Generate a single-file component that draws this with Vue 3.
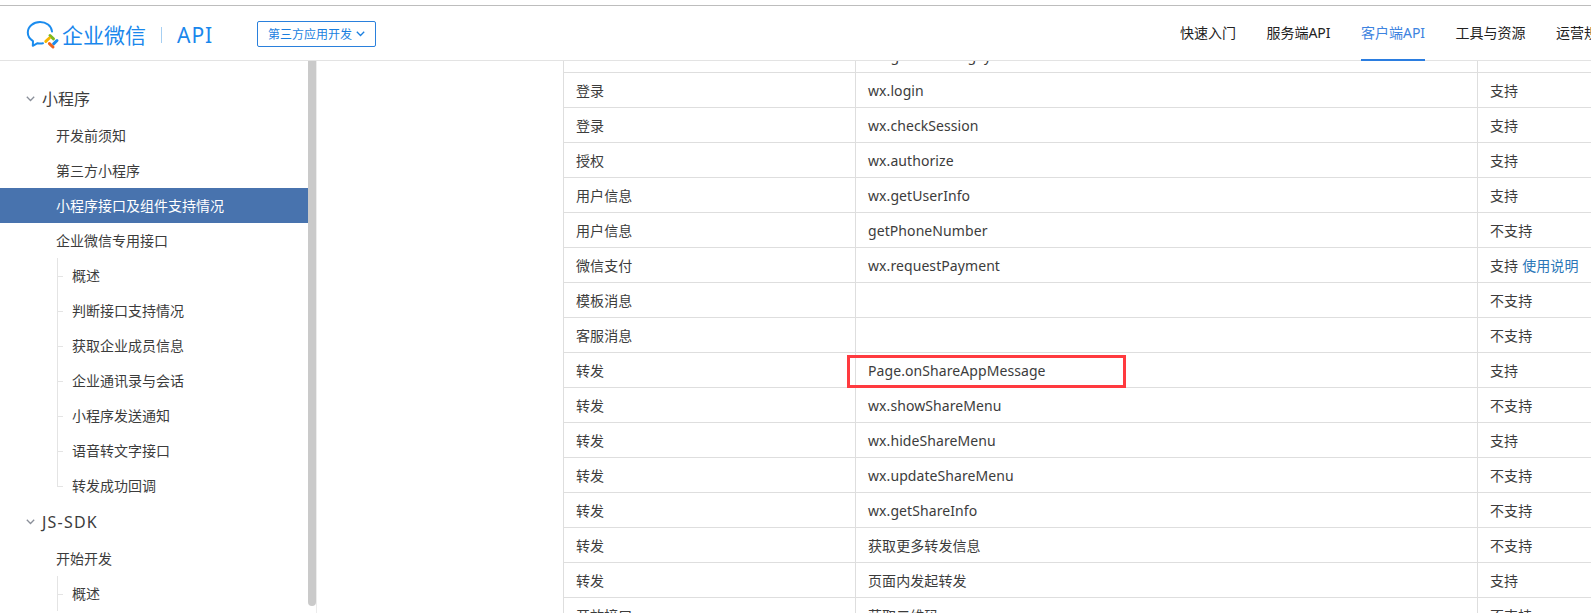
<script setup>
const sideItems = [
  { t: '小程序', k: 'group' },
  { t: '开发前须知', k: 'item' },
  { t: '第三方小程序', k: 'item' },
  { t: '小程序接口及组件支持情况', k: 'item active' },
  { t: '企业微信专用接口', k: 'item' },
  { t: '概述', k: 'sub first' },
  { t: '判断接口支持情况', k: 'sub' },
  { t: '获取企业成员信息', k: 'sub' },
  { t: '企业通讯录与会话', k: 'sub' },
  { t: '小程序发送通知', k: 'sub' },
  { t: '语音转文字接口', k: 'sub' },
  { t: '转发成功回调', k: 'sub last' },
  { t: 'JS-SDK', k: 'group wide' },
  { t: '开始开发', k: 'item' },
  { t: '概述', k: 'sub first' },
]
const nav = ['快速入门', '服务端API', '客户端API', '工具与资源', '运营规范']
const rows = [
  ['', 'wx.getExtConfigSync', ''],
  ['登录', 'wx.login', '支持'],
  ['登录', 'wx.checkSession', '支持'],
  ['授权', 'wx.authorize', '支持'],
  ['用户信息', 'wx.getUserInfo', '支持'],
  ['用户信息', 'getPhoneNumber', '不支持'],
  ['微信支付', 'wx.requestPayment', '支持', '使用说明'],
  ['模板消息', '', '不支持'],
  ['客服消息', '', '不支持'],
  ['转发', 'Page.onShareAppMessage', '支持'],
  ['转发', 'wx.showShareMenu', '不支持'],
  ['转发', 'wx.hideShareMenu', '支持'],
  ['转发', 'wx.updateShareMenu', '不支持'],
  ['转发', 'wx.getShareInfo', '不支持'],
  ['转发', '获取更多转发信息', '不支持'],
  ['转发', '页面内发起转发', '支持'],
  ['开放接口', '获取二维码', '不支持'],
]
</script>

<template>
  <div class="page">
    <header class="header">
      <div class="brand">
        <svg class="logo" width="36" height="32" viewBox="0 0 36 32" fill="none">
          <path d="M26 12.5C25.4 6.5 20 3 14 3C7.5 3 1.8 7.6 1.8 13.6C1.8 17.2 3.9 20.2 7 22.1L6.8 26.8L11.6 24.2C13.2 24.5 15 24.6 17 24.2" stroke="#1b8cee" stroke-width="2" stroke-linecap="round" stroke-linejoin="round"/>
          <path d="M24 16.5L27.5 19.8" stroke="#7fb81f" stroke-width="3" stroke-linecap="round"/>
          <path d="M31 21.5L27.6 24.8" stroke="#1b8cee" stroke-width="3" stroke-linecap="round"/>
          <path d="M27 28L23.4 24.6" stroke="#f0631e" stroke-width="3" stroke-linecap="round"/>
          <path d="M19.8 22.4L23.4 19" stroke="#f7b500" stroke-width="3" stroke-linecap="round"/>
        </svg>
        <span class="brand-name">企业微信</span>
        <i class="brand-sep"></i>
        <span class="brand-api">API</span>
      </div>
      <button class="switcher">
        第三方应用开发
        <svg width="9" height="6" viewBox="0 0 9 6" fill="none"><path d="M.8.8L4.5 4.5 8.2.8" stroke="#1a7fe0" stroke-width="1.3"/></svg>
      </button>
      <nav class="nav">
        <a v-for="n in nav" :key="n" :class="{ on: n === '客户端API' }">{{ n }}</a>
      </nav>
    </header>

    <div class="body">
      <aside class="side">
        <div class="side-list">
          <div v-for="(s, i) in sideItems" :key="i" class="side-row" :class="s.k">
            <svg v-if="s.k.startsWith('group')" class="caret" width="9" height="6" viewBox="0 0 9 6" fill="none"><path d="M.8.8L4.5 4.5 8.2.8" stroke="#8a8f99" stroke-width="1.3"/></svg>
            {{ s.t }}
          </div>
        </div>
        <div class="scrollbar"></div>
      </aside>

      <main class="main">
        <table class="table">
          <tbody>
            <tr v-for="(r, i) in rows" :key="i">
              <td class="c1">{{ r[0] }}</td>
              <td class="c2">{{ r[1] }}</td>
              <td class="c3">{{ r[2] }}<a v-if="r[3]" class="link">{{ r[3] }}</a></td>
            </tr>
          </tbody>
        </table>
        <div class="mark"></div>
      </main>
    </div>
  </div>
</template>

<style>
html, body { margin: 0; padding: 0; overflow: hidden; background: #fff; }
</style>

<style scoped>
.page {
  width: 1591px;
  height: 613px;
  overflow: hidden;
  display: flex;
  flex-direction: column;
  background: #fff;
  color: #333;
  font-family: "Noto Sans", "Noto Sans CJK SC", sans-serif;
  font-size: 14px;
}
.header {
  flex: none;
  height: 54px;
  margin-top: 5px;
  border-top: 1px solid #bdbdbd;
  border-bottom: 1px solid #e3e3e3;
  box-sizing: content-box;
  display: flex;
  align-items: center;
  padding-left: 26px;
  position: relative;
  z-index: 2;
  background: #fff;
}
.brand { display: flex; align-items: center; width: 231px; margin-top: 4px; color: #1a87ec; }
.logo { flex: none; }
.brand-name { font-size: 21px; line-height: 28px; }
.brand-sep { width: 1px; height: 16px; background: #a6cff2; margin: 0 15px 0 15px; }
.brand-api { font-size: 21px; letter-spacing: 1px; }
.switcher {
  width: 119px;
  height: 26px;
  margin-top: 2px;
  padding: 0;
  display: flex;
  align-items: center;
  justify-content: center;
  gap: 4px;
  background: #fff;
  border: 1px solid #2a80dc;
  border-radius: 2px;
  color: #1a7fe0;
  font: inherit;
  font-size: 12px;
}
.nav {
  position: absolute;
  left: 1180px;
  top: 0;
  bottom: -1px;
  display: flex;
  gap: 30.4px;
  white-space: nowrap;
}
.nav a {
  display: flex;
  align-items: center;
  height: 100%;
  box-sizing: border-box;
  padding-bottom: 2px;
  border-bottom: 2px solid transparent;
  color: #222;
  font-size: 14px;
}
.nav a.on { color: #3d83e0; border-bottom-color: #2b7de0; }
.body { flex: 1; min-height: 0; display: flex; overflow: hidden; }
.side {
  flex: none;
  width: 316px;
  border-right: 1px solid #ececec;
  display: flex;
  position: relative;
  overflow: hidden;
}
.side-list { width: 308px; flex: none; padding-top: 19px; }
.side-row {
  height: 35px;
  line-height: 35px;
  padding-left: 56px;
  white-space: nowrap;
  position: relative;
  font-size: 14px;
  color: #3c3c3c;
}
.group { padding-left: 42px; font-size: 16px; height: 38px; line-height: 38px; color: #3c3c3c; }
.wide { letter-spacing: 1.2px; }
.caret { position: absolute; left: 26px; top: 16px; }
.active { background: #4873ae; color: #fff; }
.sub { padding-left: 72px; }
.sub::before {
  content: "";
  position: absolute;
  left: 57px;
  top: 0;
  bottom: 0;
  border-left: 1px solid #e4e4e4;
}
.sub::after {
  content: "";
  position: absolute;
  left: 57px;
  top: 18px;
  width: 6px;
  border-top: 1px solid #e4e4e4;
}
.sub.last::before { bottom: 17px; }
.scrollbar {
  flex: none;
  width: 8px;
  height: 545px;
  background: #cacaca;
  border-radius: 0 0 4px 4px;
}
.main { flex: 1; position: relative; overflow: hidden; padding-left: 246px; }
.table {
  border-collapse: collapse;
  table-layout: fixed;
  width: 1100px;
  margin-top: -24px;
}
.table td {
  height: 34px;
  padding: 0 12px;
  border: 1px solid #dedede;
  color: #3c3c3c;
  font-size: 14px;
  letter-spacing: .08px;
  white-space: nowrap;
}
.c1 { width: 267px; }
.c2 { width: 597px; }
.link { margin-left: 4px; color: #2a76b8; }
.mark {
  position: absolute;
  left: 530px;
  top: 294px;
  width: 273px;
  height: 27px;
  border: 3px solid #ff3a3f;
}
</style>
